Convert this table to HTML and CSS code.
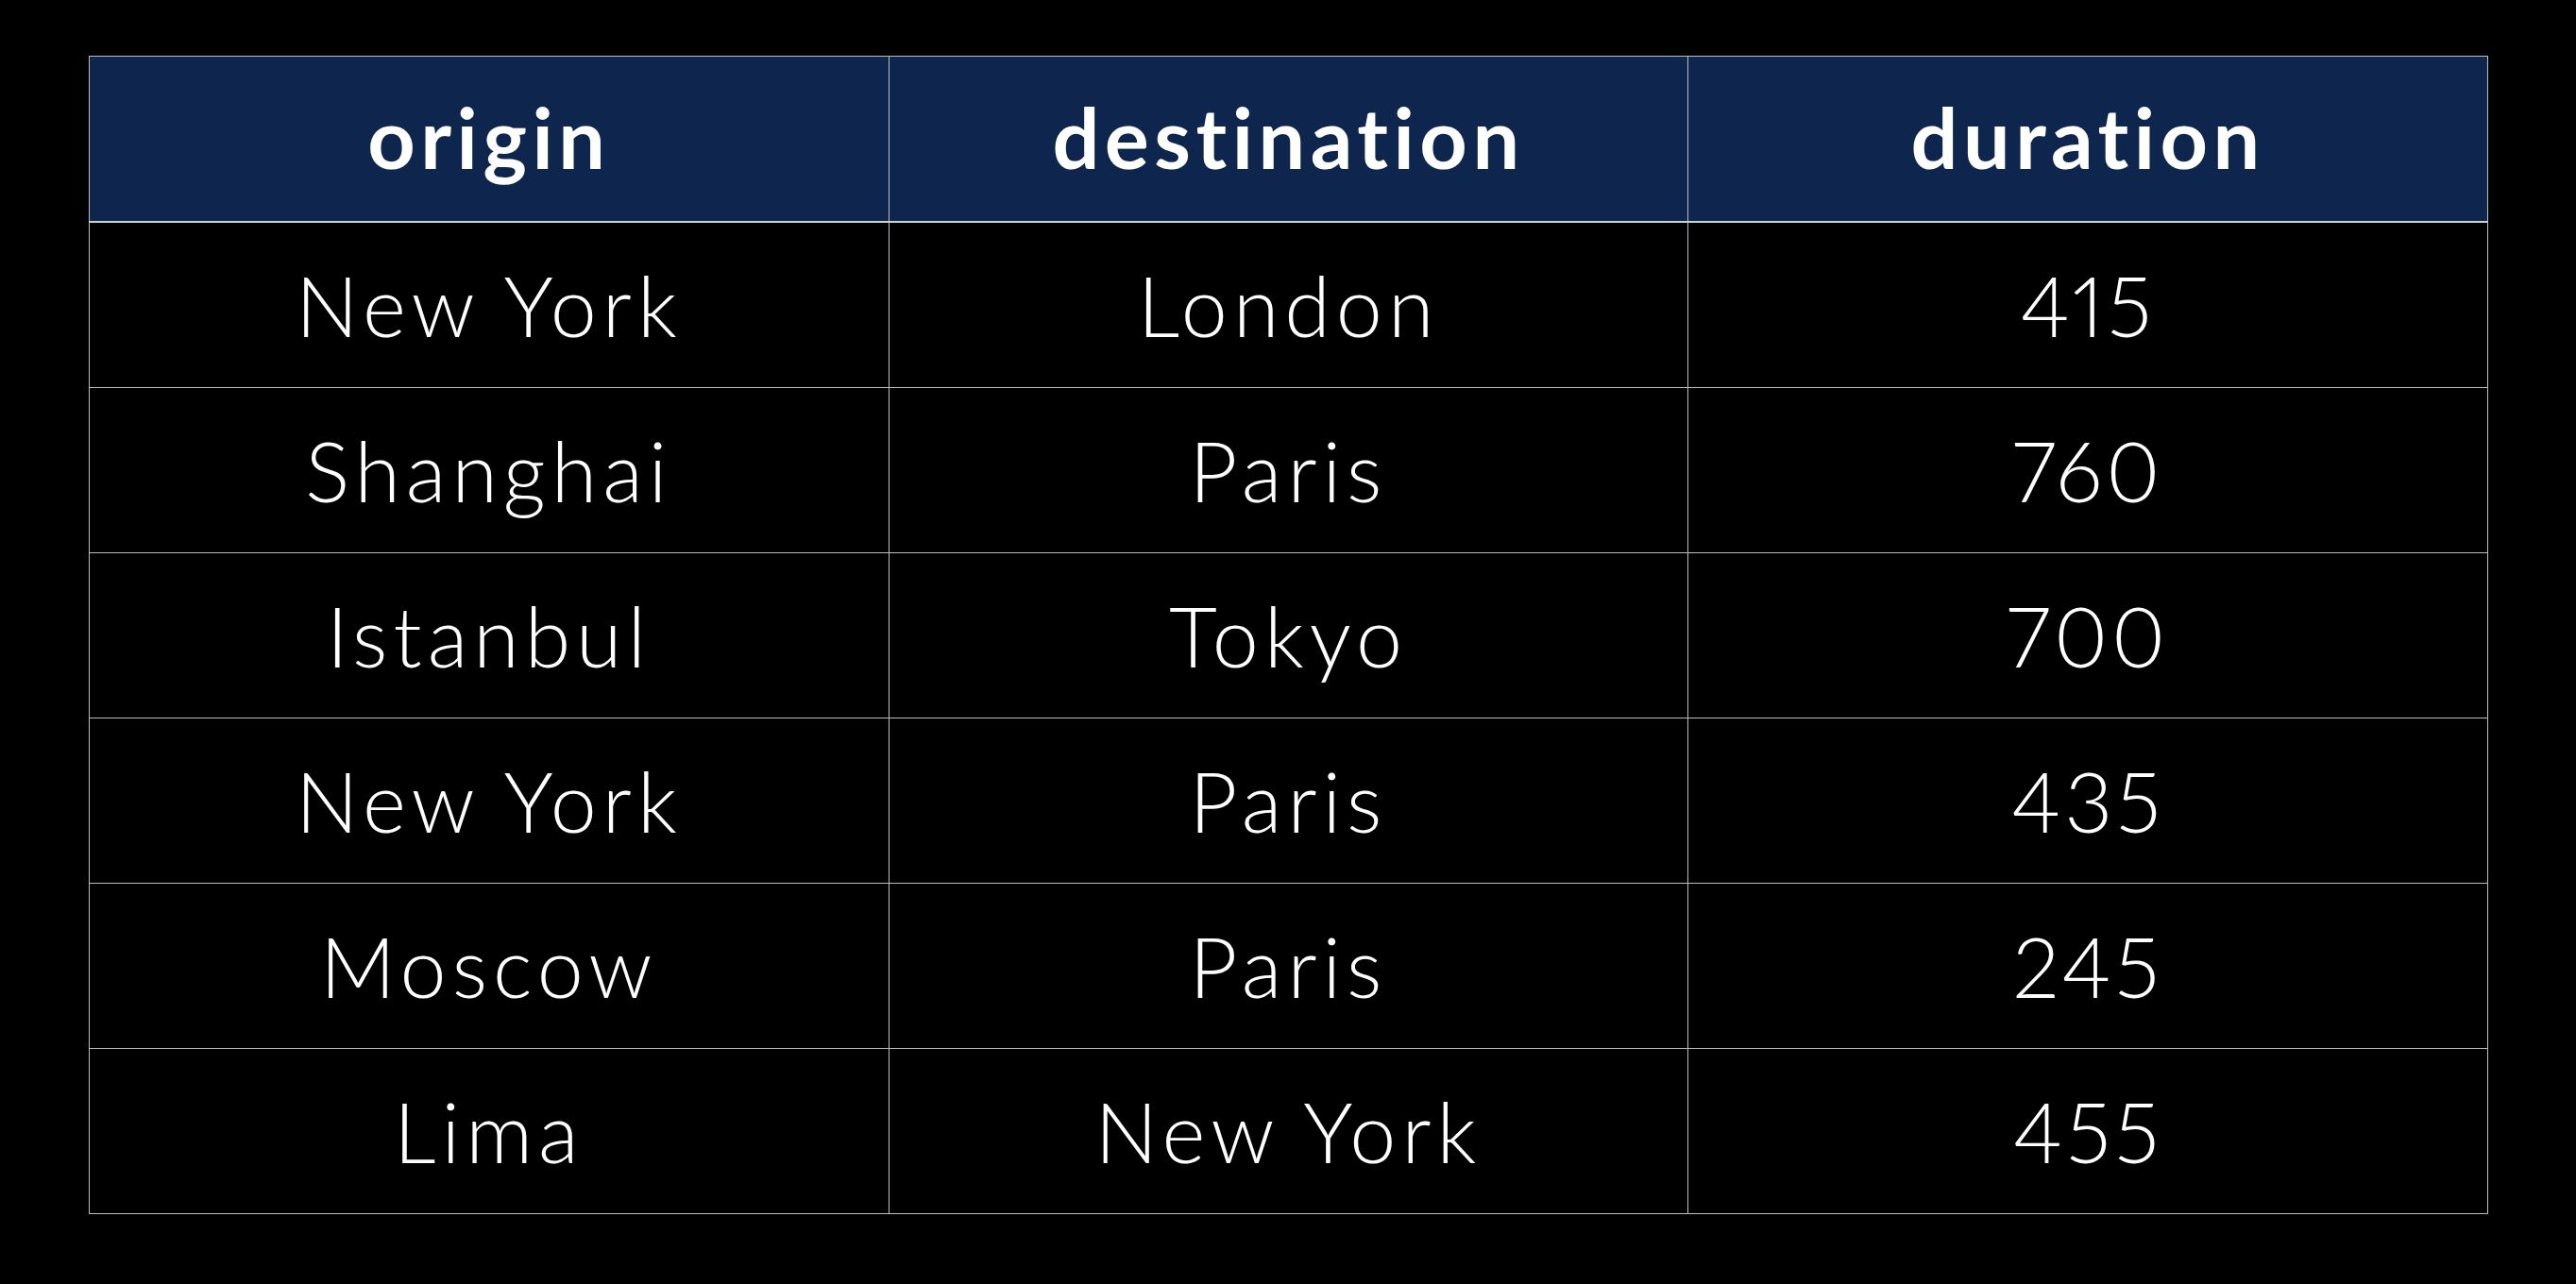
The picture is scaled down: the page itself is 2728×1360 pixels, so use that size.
FILE: index.html
```html
<!DOCTYPE html>
<html>
<head>
<meta charset="utf-8">
<link rel="stylesheet" href="styles.css">
</head>
<body>
<div class="wrap">
<table class="grid">
<thead>
<tr><th>origin</th><th>destination</th><th>duration</th></tr>
</thead>
<tbody>
<tr><td>New York</td><td>London</td><td class="num">415</td></tr>
<tr><td>Shanghai</td><td>Paris</td><td class="num">760</td></tr>
<tr><td>Istanbul</td><td>Tokyo</td><td class="num">700</td></tr>
<tr><td>New York</td><td>Paris</td><td class="num">435</td></tr>
<tr><td>Moscow</td><td>Paris</td><td class="num">245</td></tr>
<tr><td>Lima</td><td>New York</td><td class="num">455</td></tr>
</tbody>
</table>
</div>
</body>
</html>
```
FILE: styles.css
```css
html, body {
  margin: 0;
  padding: 0;
  background: #000;
  width: 2728px;
  height: 1360px;
  overflow: hidden;
}
.wrap {
  padding: 59px 0 0 94px;
}
.grid {
  border-collapse: collapse;
  width: 2541px;
  table-layout: fixed;
  font-family: Lato, "Noto Sans", sans-serif;
  color: #fff;
}
.grid th, .grid td {
  border: 1px solid #bdbdbd;
  text-align: center;
  vertical-align: middle;
  padding: 0;
  height: 174px;
}
.grid th {
  background: #0e264e;
  font-weight: 700;
  font-size: 88px;
  border-bottom: 2px solid #d0d0d0;
  letter-spacing: 5.5px;
  height: 169px;
  padding-bottom: 5px;
}
.grid td {
  font-weight: 300;
  font-size: 88px;
  letter-spacing: 6px;
}
.grid td.num {
  font-variant-numeric: proportional-nums;
  letter-spacing: 4px;
}
```
